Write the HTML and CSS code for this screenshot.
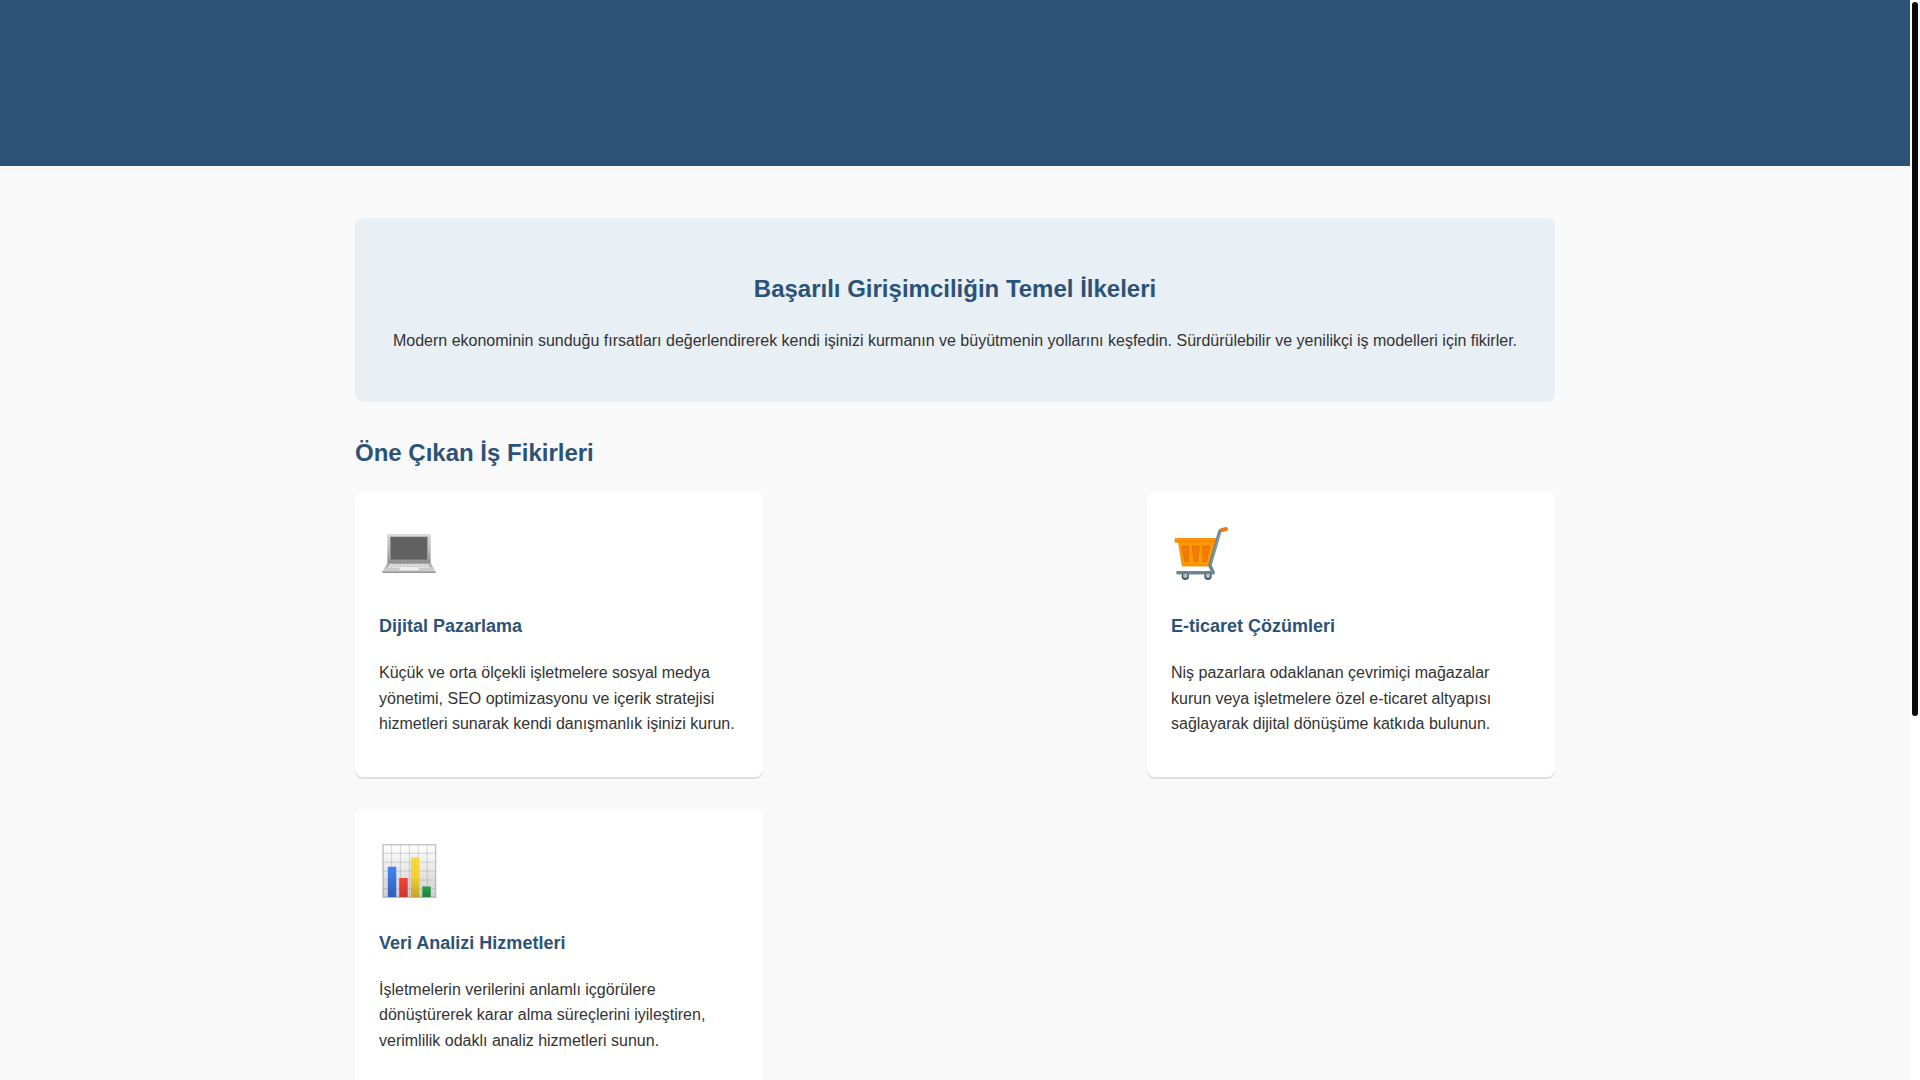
FILE: index.html
```html
<!DOCTYPE html>
<html lang="tr">
    <head>
        <meta charset="UTF-8">
        <meta name="viewport" content="width=device-width, initial-scale=1.0">
        <title>İş Fikirleri</title>
        <link rel="stylesheet" href="styles.css">
    </head>
    <body>
        <div class="page">
            <header class="header"></header>

            <main class="container">
                <section class="hero">
                    <h2>Başarılı Girişimciliğin Temel İlkeleri</h2>
                    <p>Modern ekonominin sunduğu fırsatları değerlendirerek kendi işinizi kurmanın ve büyütmenin yollarını keşfedin. Sürdürülebilir ve yenilikçi iş modelleri için fikirler.</p>
                </section>

                <section>
                    <h2>Öne Çıkan İş Fikirleri</h2>
                    <div class="cards">
                        <article class="card">
                            <!-- laptop -->
                            <svg class="card-icon" viewBox="0 0 60 77" aria-hidden="true">
                                <defs>
                                    <linearGradient id="lid" x1="0" y1="0" x2="0" y2="1">
                                        <stop offset="0" stop-color="#d6d6d6"/>
                                        <stop offset="0.5" stop-color="#bdbdbd"/>
                                        <stop offset="1" stop-color="#8c8c8c"/>
                                    </linearGradient>
                                    <linearGradient id="base" x1="0" y1="0" x2="0" y2="1">
                                        <stop offset="0" stop-color="#a8a8a8"/>
                                        <stop offset="1" stop-color="#d2d2d2"/>
                                    </linearGradient>
                                </defs>
                                <rect x="8.3" y="18" width="43.4" height="29.5" rx="1.2" fill="url(#lid)"/>
                                <rect x="9.3" y="18.6" width="41.4" height="1" fill="#e4e4e4"/>
                                <rect x="11" y="20.6" width="37.8" height="23.6" fill="#9a9a9a"/>
                                <rect x="11.8" y="21.2" width="36.2" height="22.4" fill="#616161"/>
                                <path d="M8.3 47H51.7L56.7 55.4H3.3Z" fill="url(#base)"/>
                                <path d="M10.5 48.6H49.5L52 52H8Z" fill="#c4c4c4"/>
                                <path d="M11 49.2H49.2M9.6 51.4H50.6" stroke="#efefef" stroke-width="1.5" stroke-dasharray="2.6 1"/>
                                <path d="M21 50.9H39L39.8 54.2H20.2Z" fill="#f0f0f0"/>
                                <path d="M3.2 55.2H56.8V56.2Q56.8 57 56 57H4Q3.2 57 3.2 56.2Z" fill="#999"/>
                            </svg>
                            <h3>Dijital Pazarlama</h3>
                            <p>Küçük ve orta ölçekli işletmelere sosyal medya yönetimi, SEO optimizasyonu ve içerik stratejisi hizmetleri sunarak kendi danışmanlık işinizi kurun.</p>
                        </article>
                        <article class="card">
                            <!-- shopping cart -->
                            <svg class="card-icon" viewBox="0 0 60 77" aria-hidden="true">
                                <path d="M7.3 25H45.8L38.8 50H11.3Z" fill="#ff9800" stroke="#f08300" stroke-width="0.8"/>
                                <rect x="3.7" y="22" width="42.8" height="4.7" rx="1.2" fill="#fb8c00"/>
                                <path d="M4.6 23.4H45" stroke="#ffa21a" stroke-width="1"/>
                                <path d="M10.7 30.2H17.6L17.3 45.5H14.1ZM21.2 30.2H28.2L26.4 45.5H23.3ZM31.9 30.2H38.9L35.3 45.5H32.1Z" fill="#f57c00" stroke="#d97100" stroke-width="0.9"/>
                                <path d="M6.8 56.8H42.3L38.9 49.5L48.7 15.8Q49.2 14.2 50.8 13.8" fill="none" stroke="#6c8591" stroke-width="3.4" stroke-linecap="round" stroke-linejoin="round"/>
                                <path d="M39.6 49L49.3 15.8" stroke="#8fa4ae" stroke-width="0.9"/>
                                <path d="M51.4 14L55 13" stroke="#f07c00" stroke-width="4" stroke-linecap="round"/>
                                <circle cx="14.3" cy="60.2" r="3.7" fill="#455a64"/>
                                <circle cx="37" cy="60.2" r="3.7" fill="#455a64"/>
                                <path d="M12.2 57.4H16.4V61Q14.3 62.8 12.2 61ZM34.9 57.4H39.1V61Q37 62.8 34.9 61Z" fill="#b0bec5"/>
                            </svg>
                            <h3>E-ticaret Çözümleri</h3>
                            <p>Niş pazarlara odaklanan çevrimiçi mağazalar kurun veya işletmelere özel e-ticaret altyapısı sağlayarak dijital dönüşüme katkıda bulunun.</p>
                        </article>
                        <article class="card">
                            <!-- bar chart -->
                            <svg class="card-icon" viewBox="0 0 60 77" aria-hidden="true">
                                <defs>
                                    <linearGradient id="paper" x1="0" y1="0" x2="0" y2="1">
                                        <stop offset="0" stop-color="#fff"/>
                                        <stop offset="1" stop-color="#cfcfcf"/>
                                    </linearGradient>
                                    <linearGradient id="blue" x1="0" y1="0" x2="0" y2="1">
                                        <stop offset="0" stop-color="#4285f4"/>
                                        <stop offset="1" stop-color="#3060b8"/>
                                    </linearGradient>
                                    <linearGradient id="red" x1="0" y1="0" x2="0" y2="1">
                                        <stop offset="0" stop-color="#f44336"/>
                                        <stop offset="1" stop-color="#c9372c"/>
                                    </linearGradient>
                                    <linearGradient id="yellow" x1="0" y1="0" x2="0" y2="1">
                                        <stop offset="0" stop-color="#fdd835"/>
                                        <stop offset="0.5" stop-color="#f2cf33"/>
                                        <stop offset="1" stop-color="#c2a428"/>
                                    </linearGradient>
                                    <linearGradient id="green" x1="0" y1="0" x2="0" y2="1">
                                        <stop offset="0" stop-color="#2ba24c"/>
                                        <stop offset="1" stop-color="#1f7f3a"/>
                                    </linearGradient>
                                </defs>
                                <rect x="4" y="11.7" width="52.6" height="52.6" fill="url(#paper)"/>
                                <path d="M12.6 12V64M21.4 12V64M30.4 12V64M39.3 12V64M48.2 12V64M4 20.3H56M4 29.2H56M4 38.1H56M4 47H56M4 55.6H56" stroke="#757575" stroke-opacity="0.3" stroke-width="0.9"/>
                                <rect x="4" y="11.7" width="52.6" height="52.6" fill="none" stroke="#8a8a8a" stroke-opacity="0.5" stroke-width="1.4"/>
                                <rect x="8.8" y="33.7" width="8.5" height="30.3" fill="url(#blue)"/>
                                <rect x="20.2" y="45" width="8.5" height="19" fill="url(#red)"/>
                                <rect x="32" y="24.4" width="8.4" height="39.6" fill="url(#yellow)"/>
                                <rect x="43.3" y="53.4" width="8.4" height="10.6" fill="url(#green)"/>
                            </svg>
                            <h3>Veri Analizi Hizmetleri</h3>
                            <p>İşletmelerin verilerini anlamlı içgörülere dönüştürerek karar alma süreçlerini iyileştiren, verimlilik odaklı analiz hizmetleri sunun.</p>
                        </article>
                    </div>
                </section>
            </main>
        </div>

        <div class="scrollbar"><div class="scrollbar-thumb"></div></div>
    </body>
</html>
```

FILE: styles.css
```css
* {
    box-sizing: border-box;
}

body {
    display: flex;
    height: 100vh;
    margin: 0;
    overflow: hidden;
    font-family: "Liberation Sans", Arial, sans-serif;
    line-height: 1.6;
    color: #333;
    background-color: #fff;
}

h2, h3 {
    color: #2c5377;
}

.page {
    flex: 1;
    overflow: hidden;
    background-color: #f9f9f9;
}

.header {
    height: 166px;
    background-color: #2c5377;
}

.container {
    max-width: 1200px;
    margin: 52px auto 32px;
}

/* intro */
.hero {
    padding: 32px;
    margin-bottom: 32px;
    text-align: center;
    background-color: #e8eff5;
    border-radius: 8px;
}

/* cards */
.cards {
    display: flex;
    flex-wrap: wrap;
    justify-content: space-between;
    row-gap: 32px;
}

.card {
    width: 34%;
    padding: 24px;
    background-color: #fff;
    border-radius: 8px;
    box-shadow: 0 2px 0 #e0e0e0;
}

.card h3 {
    margin: 19px 0;
    font-size: 18px;
    line-height: 29px;
}

.card-icon {
    display: block;
    width: 60px;
    height: 77px;
}

/* scrollbar */
.scrollbar {
    width: 10px;
    padding: 2px;
}

.scrollbar-thumb {
    width: 6px;
    height: 66.4%;
    background-color: #0c0c0c;
    border-radius: 3px;
}
```
